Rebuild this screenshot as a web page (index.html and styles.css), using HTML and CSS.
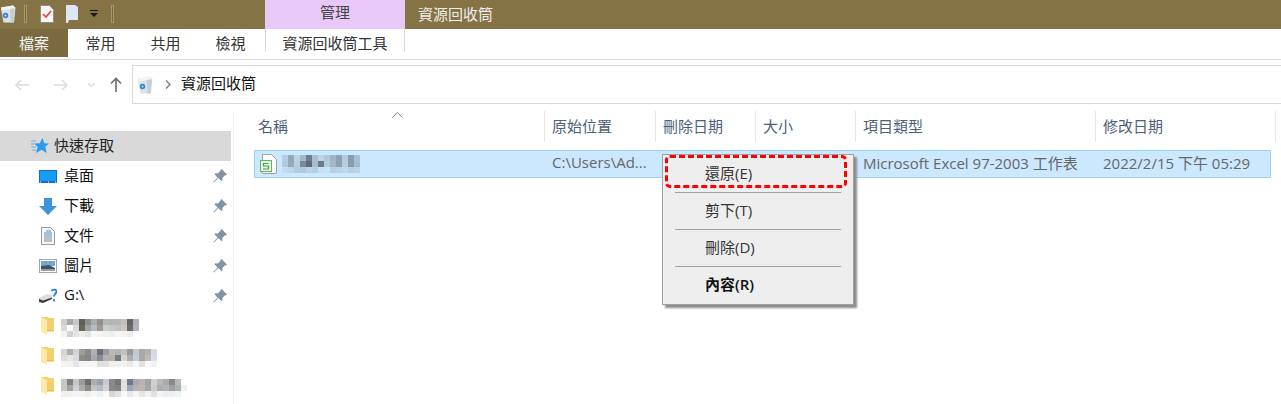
FILE: index.html
```html
<!DOCTYPE html>
<html lang="zh-Hant">
<head>
    <meta charset="UTF-8">
    <title>資源回收筒</title>
    <link rel="stylesheet" href="styles.css">
</head>
<body>
<svg class="defs" width="0" height="0">
    <defs>
        <symbol id="bin" viewBox="0 0 16 18">
            <path d="M1 2.5 13 .5l2.500 2.500-1.500 14.500H3.500L1 4z" fill="#dbe1e6"/>
            <path d="M10 2.500 15 2l-1.500 15.500h-3z" fill="#c6cdd3"/>
            <path d="M1 2.500 13 .5l2.500 2.500L2 5.500z" fill="#f1f3f5"/>
            <circle cx="5.500" cy="10.500" r="2.700" fill="#2a86d8"/>
            <circle cx="5.500" cy="10.500" r=".9" fill="#e3e6e8"/>
        </symbol>
        <symbol id="pin" viewBox="0 0 14 14">
            <path d="M8.500 0 14 5.500l-1 1-1-.3-2.700 2.700.2 2.400-1 1L5.300 9.100 1 13.500l-.6-.6 4.200-4.400L1.400 5.300l1-1 2.400.2L7.500 1.800l-.1-.9z" fill="#8093a3"/>
        </symbol>
        <symbol id="folder" viewBox="0 0 13 18">
            <path d="M0 0h7l1 1h5v13H5z" fill="#f6cf6d"/>
            <path d="M0 0 6 3v15l-6-3z" fill="#fde9a8"/>
            <path d="M6 13h7v1.500H6z" fill="#e7b94f"/>
        </symbol>
    </defs>
</svg>

<div class="window">
    <div class="titlebar">
        <div class="qat">
            <svg class="qat-bin" width="16" height="18"><use href="#bin"/></svg>
            <span class="qat-sep"></span>
            <svg width="14" height="18" viewBox="0 0 14 18">
                <path d="M.5.500h9l4 4v13H.500z" fill="#f6f6f6" stroke="#8c8c8c"/>
                <path d="M3 9l3 3 5-6" fill="none" stroke="#e8452c" stroke-width="1.600"/>
            </svg>
            <svg class="qat-doc" width="12" height="18" viewBox="0 0 12 18">
                <path d="M0 0h9l3 2v13H3l-1 3H0z" fill="#dde6f2"/>
            </svg>
            <svg class="qat-drop" width="8" height="8" viewBox="0 0 8 8">
                <path d="M0 0h8v1H0zM0 3h8L4 7z" fill="#1a1a1a"/>
            </svg>
            <span class="qat-sep qat-sep-end"></span>
        </div>
        <div class="context-tab">管理</div>
        <div class="window-title">資源回收筒</div>
    </div>

    <div class="ribbon">
        <div class="tab tab-file">檔案</div>
        <div class="tab">常用</div>
        <div class="tab">共用</div>
        <div class="tab">檢視</div>
        <div class="tab tab-context">資源回收筒工具</div>
    </div>

    <div class="navbar">
        <div class="nav-buttons">
            <svg width="16" height="14" viewBox="0 0 16 14"><path d="M15 7H2M7 2 2 7l5 5" fill="none" stroke="#dcdcdc" stroke-width="1.500"/></svg>
            <svg width="16" height="14" viewBox="0 0 16 14"><path d="M1 7h13M9 2l5 5-5 5" fill="none" stroke="#dcdcdc" stroke-width="1.500"/></svg>
            <svg width="9" height="6" viewBox="0 0 9 6"><path d="M1 1l3.500 3.500L8 1" fill="none" stroke="#dcdcdc" stroke-width="1.500"/></svg>
            <svg width="12" height="15" viewBox="0 0 12 15"><path d="M6 15V2M1 6.500 6 1.500l5 5" fill="none" stroke="#6d6d6d" stroke-width="1.600"/></svg>
        </div>
        <div class="address">
            <svg width="16" height="18"><use href="#bin"/></svg>
            <svg class="crumb" width="6" height="9" viewBox="0 0 6 9"><path d="M1 .500 5 4.500l-4 4" fill="none" stroke="#777" stroke-width="1.300"/></svg>
            <span>資源回收筒</span>
        </div>
    </div>

    <div class="main">
        <div class="sidebar">
            <div class="side-row side-head">
                <svg class="side-star" width="18" height="16" viewBox="0 0 18 16">
                    <path d="M11.500 0l1.800 5.200 4.700.3-3.700 3.200L15.700 15 10.500 11.800 5 15l1.700-6.300L3 5.500l5.800-.3z" fill="#2b9bef"/>
                    <path d="M0 3h5M0 6h3M0 9h5M1 12h4" stroke="#5fb2ee" stroke-width="1"/>
                </svg>
                <span>快速存取</span>
            </div>
            <div class="side-row">
                <svg class="side-icon" width="18" height="13" viewBox="0 0 18 13">
                    <rect width="18" height="13" fill="#0f6fc6"/>
                    <rect x="1" y="1" width="16" height="10" fill="#199cf5"/>
                    <path d="M1 12h1M9 12h1M16 12h1" stroke="#fff"/>
                </svg>
                <span class="side-label">桌面</span>
                <svg class="pin" width="14" height="14"><use href="#pin"/></svg>
            </div>
            <div class="side-row">
                <svg class="side-icon" width="18" height="17" viewBox="0 0 18 17">
                    <path d="M5 0h8v8h5l-9 9-9-9h5z" fill="#3f93e0"/>
                </svg>
                <span class="side-label">下載</span>
                <svg class="pin" width="14" height="14"><use href="#pin"/></svg>
            </div>
            <div class="side-row">
                <svg class="side-icon" width="18" height="18" viewBox="0 0 18 18">
                    <path d="M2.500.500h9l4 4v13h-13z" fill="#f7f7f7" stroke="#9a9a9a"/>
                    <path d="M7 4h5M5 6h8M5 8h8" stroke="#3b8fd8"/>
                    <path d="M5 10h8M5 12h8M5 14h8" stroke="#7d8790"/>
                </svg>
                <span class="side-label">文件</span>
                <svg class="pin" width="14" height="14"><use href="#pin"/></svg>
            </div>
            <div class="side-row">
                <svg class="side-icon" width="18" height="14" viewBox="0 0 18 14">
                    <rect x=".5" y=".5" width="17" height="13" fill="#fff" stroke="#a6a6a6"/>
                    <rect x="2" y="2" width="14" height="5" fill="#6fa8d8"/>
                    <path d="M2 7l8-1 6 3v3H2z" fill="#4b4f58"/>
                    <path d="M2 10h14v2H2z" fill="#9a9da5"/>
                </svg>
                <span class="side-label">圖片</span>
                <svg class="pin" width="14" height="14"><use href="#pin"/></svg>
            </div>
            <div class="side-row">
                <svg class="side-icon" width="18" height="16" viewBox="0 0 18 16">
                    <path d="M0 10l8-4 5 1v3l-9 2.500-4-1z" fill="#dcdcdc"/>
                    <path d="M0 11l4 1.500L13 9.500v1.500L4 15 0 14z" fill="#3a3a3a"/>
                    <path d="M12.500 3c1-2 5-2 5 .500 0 2-2.500 2.500-2.500 5M15 11v2.500" fill="none" stroke="#1f7fd6" stroke-width="1.800"/>
                </svg>
                <span class="side-label">G:\</span>
                <svg class="pin" width="14" height="14"><use href="#pin"/></svg>
            </div>
            <div class="side-row">
                <svg class="side-folder" width="13" height="18"><use href="#folder"/></svg>
                <svg class="mosaic mosaic-side" width="78" height="18">
                    <rect x="0" y="0" fill="#d0cfcb"/><rect x="6" y="0" fill="#a9a8a6"/><rect x="12" y="0" fill="#c3c9cc"/><rect x="18" y="0" fill="#605e5a"/><rect x="24" y="0" fill="#8f8d88"/><rect x="30" y="0" fill="#a9adb0"/><rect x="36" y="0" fill="#958f8a"/><rect x="42" y="0" fill="#b8b6b4"/><rect x="48" y="0" fill="#b5b5b2"/><rect x="54" y="0" fill="#b3b5b8"/><rect x="60" y="0" fill="#c4c0b8"/><rect x="66" y="0" fill="#66625f"/><rect x="72" y="0" fill="#adb0b6"/>
                    <rect x="0" y="6" fill="#d8dadb"/><rect x="6" y="6" fill="#ffffff"/><rect x="12" y="6" fill="#d8dbdd"/><rect x="18" y="6" fill="#6b6650"/><rect x="24" y="6" fill="#9da4a8"/><rect x="30" y="6" fill="#b5bcc0"/><rect x="36" y="6" fill="#a09a92"/><rect x="42" y="6" fill="#c9ced2"/><rect x="48" y="6" fill="#c8c6c0"/><rect x="54" y="6" fill="#bfc1c2"/><rect x="60" y="6" fill="#ccc8c0"/><rect x="66" y="6" fill="#6c6a6a"/><rect x="72" y="6" fill="#b2b5ba"/>
                    <rect x="0" y="12" fill="#f2f2f0"/><rect x="6" y="12" fill="#d2d2d2"/><rect x="12" y="12" fill="#e4e6e6"/><rect x="18" y="12" fill="#eeeeec"/><rect x="24" y="12" fill="#e2e4e4"/><rect x="30" y="12" fill="#f6f6f6"/><rect x="36" y="12" fill="#f4f4f2"/><rect x="42" y="12" fill="#f0f0ee"/><rect x="48" y="12" fill="#eeeeea"/><rect x="54" y="12" fill="#f6f6f6"/><rect x="60" y="12" fill="#f2f2f0"/><rect x="66" y="12" fill="#eeeeee"/>
                </svg>
            </div>
            <div class="side-row">
                <svg class="side-folder" width="13" height="18"><use href="#folder"/></svg>
                <svg class="mosaic mosaic-side" width="96" height="18">
                    <rect x="0" y="0" fill="#d4d4d0"/><rect x="6" y="0" fill="#aeaeac"/><rect x="12" y="0" fill="#d0d4d6"/><rect x="18" y="0" fill="#a09c98"/><rect x="24" y="0" fill="#8c8a88"/><rect x="30" y="0" fill="#aeb2b6"/><rect x="36" y="0" fill="#6e7278"/><rect x="42" y="0" fill="#9a9ea4"/><rect x="48" y="0" fill="#bcb8b2"/><rect x="54" y="0" fill="#b0b4ba"/><rect x="60" y="0" fill="#c4c0b4"/><rect x="66" y="0" fill="#98989a"/><rect x="72" y="0" fill="#c0c8d0"/><rect x="78" y="0" fill="#a8a8aa"/><rect x="84" y="0" fill="#b4b2b0"/><rect x="90" y="0" fill="#d4dae6"/>
                    <rect x="0" y="6" fill="#dcdcd8"/><rect x="6" y="6" fill="#e6e6e6"/><rect x="12" y="6" fill="#d8dcde"/><rect x="18" y="6" fill="#8e8c88"/><rect x="24" y="6" fill="#868684"/><rect x="30" y="6" fill="#a4a8ac"/><rect x="36" y="6" fill="#8a8e92"/><rect x="42" y="6" fill="#b0b4b8"/><rect x="48" y="6" fill="#b8b0a4"/><rect x="54" y="6" fill="#747c82"/><rect x="60" y="6" fill="#d4d2cc"/><rect x="66" y="6" fill="#b0aeaa"/><rect x="72" y="6" fill="#c4ccd2"/><rect x="78" y="6" fill="#a6a8aa"/><rect x="84" y="6" fill="#bebab4"/><rect x="90" y="6" fill="#d8deea"/>
                    <rect x="0" y="12" fill="#f4f4f2"/><rect x="6" y="12" fill="#f2f2f2"/><rect x="12" y="12" fill="#e4e6e8"/><rect x="18" y="12" fill="#f4f4f2"/><rect x="24" y="12" fill="#f6f6f6"/><rect x="30" y="12" fill="#f6f6f4"/><rect x="36" y="12" fill="#e0e0dc"/><rect x="42" y="12" fill="#e0e0de"/><rect x="48" y="12" fill="#eeeeea"/><rect x="54" y="12" fill="#f0f0ee"/><rect x="60" y="12" fill="#f2f2f0"/><rect x="66" y="12" fill="#eaeaea"/><rect x="72" y="12" fill="#f6f6f6"/><rect x="78" y="12" fill="#e0e0e0"/><rect x="84" y="12" fill="#f8f8f8"/><rect x="90" y="12" fill="#f2f2f2"/>
                </svg>
            </div>
            <div class="side-row">
                <svg class="side-folder" width="13" height="18"><use href="#folder"/></svg>
                <svg class="mosaic mosaic-side" width="126" height="18">
                    <rect x="0" y="0" fill="#c8c4be"/><rect x="6" y="0" fill="#7e8080"/><rect x="12" y="0" fill="#c4c8cc"/><rect x="18" y="0" fill="#9c9a98"/><rect x="24" y="0" fill="#6e6c6c"/><rect x="30" y="0" fill="#b0aeaa"/><rect x="36" y="0" fill="#98a4aa"/><rect x="42" y="0" fill="#c8ccd2"/><rect x="48" y="0" fill="#908884"/><rect x="54" y="0" fill="#72757a"/><rect x="60" y="0" fill="#e0e0da"/><rect x="66" y="0" fill="#747a8c"/><rect x="72" y="0" fill="#a8aab0"/><rect x="78" y="0" fill="#b8b4a8"/><rect x="84" y="0" fill="#a4a4a4"/><rect x="90" y="0" fill="#d0d0d0"/><rect x="96" y="0" fill="#b8b8b4"/><rect x="102" y="0" fill="#a4acb2"/><rect x="108" y="0" fill="#8e8880"/><rect x="114" y="0" fill="#b4bcc2"/>
                    <rect x="0" y="6" fill="#cac6c0"/><rect x="6" y="6" fill="#a2a2a2"/><rect x="12" y="6" fill="#ccd0d4"/><rect x="18" y="6" fill="#aeaca8"/><rect x="24" y="6" fill="#8c8a88"/><rect x="30" y="6" fill="#c6c4c0"/><rect x="36" y="6" fill="#b4bcc2"/><rect x="42" y="6" fill="#d0d2d6"/><rect x="48" y="6" fill="#8e8884"/><rect x="54" y="6" fill="#80848a"/><rect x="60" y="6" fill="#e2e2dc"/><rect x="66" y="6" fill="#a0a4ae"/><rect x="72" y="6" fill="#b0b4ba"/><rect x="78" y="6" fill="#bcb8ae"/><rect x="84" y="6" fill="#a6a6a6"/><rect x="90" y="6" fill="#cccccc"/><rect x="96" y="6" fill="#aeaeaa"/><rect x="102" y="6" fill="#b0b6bc"/><rect x="108" y="6" fill="#a0a0a0"/><rect x="114" y="6" fill="#a8b0b6"/><rect x="120" y="6" fill="#f0f0f0"/>
                    <rect x="0" y="12" fill="#eeeeec"/><rect x="6" y="12" fill="#f0f0f0"/><rect x="12" y="12" fill="#f2f4f4"/><rect x="18" y="12" fill="#f4f4f2"/><rect x="24" y="12" fill="#eeeeee"/><rect x="30" y="12" fill="#f6f6f4"/><rect x="36" y="12" fill="#f0f2f2"/><rect x="42" y="12" fill="#f8f8f8"/><rect x="48" y="12" fill="#d8d6d4"/><rect x="54" y="12" fill="#e2e2e2"/><rect x="60" y="12" fill="#f8f8f4"/><rect x="66" y="12" fill="#e8e8ec"/><rect x="72" y="12" fill="#f4f4f4"/><rect x="78" y="12" fill="#e4e4e0"/><rect x="84" y="12" fill="#f2f2f2"/><rect x="90" y="12" fill="#e0e0e0"/><rect x="96" y="12" fill="#f4f4f4"/><rect x="102" y="12" fill="#eceef0"/><rect x="108" y="12" fill="#eeeeee"/><rect x="114" y="12" fill="#f2f4f4"/>
                </svg>
            </div>
        </div>

        <div class="content">
            <div class="columns">
                <div class="col col-name">名稱<svg class="sort" width="11" height="6" viewBox="0 0 11 6"><path d="M.5 5.500l5-5 5 5" fill="none" stroke="#8a8a8a"/></svg></div>
                <div class="col">原始位置</div>
                <div class="col">刪除日期</div>
                <div class="col">大小</div>
                <div class="col">項目類型</div>
                <div class="col">修改日期</div>
            </div>
            <div class="file-row">
                <div class="cell cell-name">
                    <svg width="17" height="20" viewBox="0 0 17 20">
                        <path d="M2.500.500h9l5 5v12.500a1.500 1.500 0 0 1-1.500 1.500h-12a1 1 0 0 1-1-1z" fill="#fbfbfb" stroke="#a0a0a0"/>
                        <rect x=".5" y="6.500" width="11" height="11" fill="#eef8ea" stroke="#5cb85c"/>
                        <path d="M8.500 9.500H3.500v2.500h5v3H3" fill="none" stroke="#3f9f45" stroke-width="1.200"/>
                    </svg>
                    <svg class="mosaic" width="78" height="18">
                        <rect x="0" y="0" fill="#b4cfe4"/><rect x="6" y="0" fill="#94a8ba"/><rect x="12" y="0" fill="#bcd4e8"/><rect x="18" y="0" fill="#a4b8c8"/><rect x="24" y="0" fill="#6e7c8c"/><rect x="30" y="0" fill="#a8c0d4"/><rect x="36" y="0" fill="#bcd4e8"/><rect x="42" y="0" fill="#b0c8dc"/><rect x="48" y="0" fill="#a0b4c6"/><rect x="54" y="0" fill="#8ea2b4"/><rect x="60" y="0" fill="#b0cce0"/><rect x="66" y="0" fill="#8a9eb0"/><rect x="72" y="0" fill="#a8c0d4"/>
                        <rect x="0" y="6" fill="#b0cbe0"/><rect x="6" y="6" fill="#96aabc"/><rect x="12" y="6" fill="#b8d0e4"/><rect x="18" y="6" fill="#7a8a9a"/><rect x="24" y="6" fill="#5e6a78"/><rect x="30" y="6" fill="#a4bcd0"/><rect x="36" y="6" fill="#6e7a88"/><rect x="42" y="6" fill="#b4cce0"/><rect x="48" y="6" fill="#a4b8cc"/><rect x="54" y="6" fill="#8ca0b2"/><rect x="60" y="6" fill="#b4cee2"/><rect x="66" y="6" fill="#889cae"/><rect x="72" y="6" fill="#a4bcd0"/>
                        <rect x="0" y="12" fill="#c4dcf0"/><rect x="6" y="12" fill="#bed6ea"/><rect x="12" y="12" fill="#b4cce0"/><rect x="18" y="12" fill="#b0c8dc"/><rect x="24" y="12" fill="#bad2e6"/><rect x="30" y="12" fill="#b6cee2"/><rect x="36" y="12" fill="#c6def2"/><rect x="42" y="12" fill="#c8e2f6"/><rect x="48" y="12" fill="#b8d0e4"/><rect x="54" y="12" fill="#bcd4e8"/><rect x="60" y="12" fill="#c0d8ec"/><rect x="66" y="12" fill="#b8d0e4"/><rect x="72" y="12" fill="#bcd4e8"/>
                    </svg>
                </div>
                <div class="cell">C:\Users\Ad...</div>
                <div class="cell"></div>
                <div class="cell"></div>
                <div class="cell">Microsoft Excel 97-2003 工作表</div>
                <div class="cell">2022/2/15 下午 05:29</div>
            </div>

            <div class="menu">
                <div class="menu-item">還原(E)</div>
                <div class="menu-sep"></div>
                <div class="menu-item">剪下(T)</div>
                <div class="menu-sep"></div>
                <div class="menu-item">刪除(D)</div>
                <div class="menu-sep"></div>
                <div class="menu-item menu-bold">內容(R)</div>
                <div class="highlight"></div>
            </div>
        </div>
    </div>
</div>
</body>
</html>
```

FILE: styles.css
```css
* {
    box-sizing: border-box;
}
body {
    margin: 0;
    background: #fff;
    font-family: "Open Sans", "Noto Sans CJK TC", sans-serif;
    font-size: 15px;
    color: #1a1a1a;
}
.defs {
    display: block;
}
.window {
    height: 404px;
    overflow: hidden;
}

/* title bar */
.titlebar {
    display: flex;
    height: 29px;
    background-color: #857345;
}
.qat {
    display: flex;
    align-items: center;
    width: 265px;
    padding-bottom: 1px;
}
.qat-bin {
    margin-right: 8px;
}
.qat-sep {
    width: 3px;
    height: 18px;
    margin-right: 13px;
    background-color: #76683f;
    border: 1px solid #a59875;
}
.qat-doc {
    margin-left: 12px;
}
.qat-drop {
    margin-left: 12px;
}
.qat-sep-end {
    margin-left: 13px;
    margin-right: 0;
}
.context-tab {
    width: 140px;
    text-align: center;
    line-height: 25px;
    background-color: #e8c8f8;
    color: #444;
}
.window-title {
    padding-left: 13px;
    line-height: 29px;
    color: #eee;
}

/* ribbon tabs */
.ribbon {
    display: flex;
    height: 28px;
    margin-bottom: 2px;
}
.tab {
    width: 65px;
    text-align: center;
    line-height: 28px;
    color: #333;
}
.tab-file {
    width: 68px;
    background-color: #7b6a40;
    color: #f2f2f2;
}
.tab-context {
    width: 140px;
    margin-left: 2px;
    height: 23px;
    line-height: 28px;
    border-left: 1px solid #d9d9d9;
    border-right: 1px solid #d9d9d9;
}

/* navigation */
.navbar {
    display: flex;
    height: 45px;
    padding-top: 5px;
    border-top: 1px solid #d9d9d9;
}
.nav-buttons {
    display: flex;
    align-items: center;
    width: 132px;
    padding-left: 14px;
    gap: 23px;
}
.nav-buttons svg:nth-child(3) {
    margin-left: -5px;
}
.nav-buttons svg:nth-child(4) {
    margin-left: -9px;
}
.address {
    flex: 1;
    display: flex;
    align-items: center;
    height: 39px;
    padding-left: 4px;
    border: 1px solid #d9d9d9;
    border-right: none;
    color: #111;
}
.address span {
    margin-bottom: 4px;
}
.crumb {
    margin: 0 10px 0 12px;
}

/* main area */
.main {
    display: flex;
}
.sidebar {
    width: 234px;
    height: 293px;
    margin-top: 7px;
    padding-top: 20px;
    border-right: 1px solid #f0f0f0;
}
.side-row {
    display: flex;
    align-items: center;
    height: 30px;
    padding-left: 39px;
    color: #111;
}
.side-row span {
    margin-bottom: 4px;
}
.side-head {
    width: 231px;
    padding-left: 31px;
    background-color: #d9d9d9;
    color: #222;
}
.side-star {
    margin-right: 5px;
}
.side-icon {
    margin-right: 7px;
}
.side-label {
    flex: 1;
}
.pin {
    margin-right: 6px;
}
.side-folder {
    margin: 0 7px 0 2px;
}
.mosaic {
    display: block;
}
.mosaic-side {
    margin-top: 4px;
}
.mosaic rect {
    width: 6px;
    height: 6px;
}

/* file list */
.content {
    flex: 1;
    position: relative;
}
.columns {
    display: flex;
    height: 46px;
    padding: 7px 0 8px 16px;
    color: #4c607a;
}
.col {
    display: flex;
    align-items: center;
    padding-left: 7px;
    padding-bottom: 2px;
    border-right: 1px solid #e5e5e5;
}
.col:nth-child(1) { width: 295px; padding-left: 8px; position: relative; }
.col:nth-child(2) { width: 111px; }
.col:nth-child(3) { width: 100px; }
.col:nth-child(4) { width: 100px; }
.col:nth-child(5) { width: 240px; }
.col:nth-child(6) { width: 180px; }
.sort {
    position: absolute;
    left: 142px;
    top: 1px;
}
.file-row {
    display: flex;
    width: 1017px;
    height: 28px;
    margin-left: 20px;
    background-color: #cce8ff;
    border: 1px solid #99d1ff;
    color: #666;
}
.cell {
    display: flex;
    align-items: center;
    padding-left: 8px;
    padding-bottom: 4px;
    white-space: nowrap;
}
.cell:nth-child(1) { width: 289px; padding: 0 0 0 5px; gap: 5px; }
.cell:nth-child(2) { width: 111px; }
.cell:nth-child(3) { width: 100px; }
.cell:nth-child(4) { width: 100px; }
.cell:nth-child(5) { width: 240px; }
.cell:nth-child(6) { width: 170px; }

/* context menu */
.menu {
    position: absolute;
    left: 428px;
    top: 50px;
    width: 192px;
    height: 151px;
    padding: 1px 12px;
    background-color: #eeeeee;
    border: 1px solid #a0a0a0;
    box-shadow: 3px 3px 2px #8c8c8c;
}
.menu-item {
    height: 36px;
    line-height: 34px;
    padding-left: 30px;
    color: #333;
}
.menu-bold {
    color: #111;
    font-weight: 600;
}
.menu-sep {
    height: 1px;
    background-color: #a0a0a0;
}
.highlight {
    position: absolute;
    left: 2px;
    top: 0;
    width: 182px;
    height: 33px;
    border: 3px dashed #ff0000;
    border-radius: 5px;
}
```
